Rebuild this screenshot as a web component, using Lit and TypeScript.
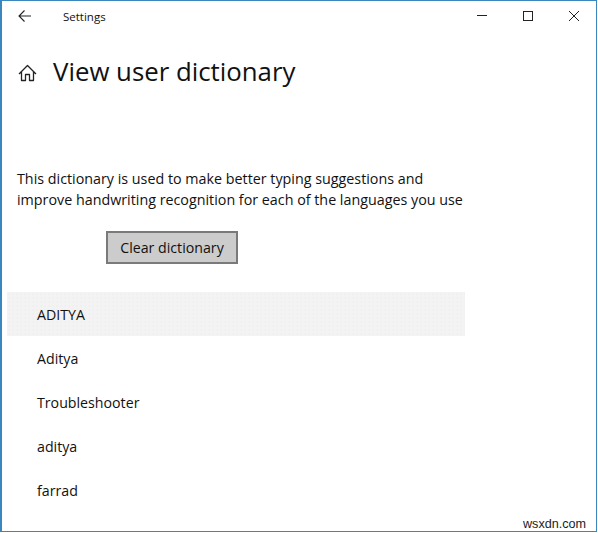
import { LitElement, html, css } from "lit";
import { customElement } from "lit/decorators.js";

@customElement("app-root")
export class AppRoot extends LitElement {
  static styles = css`
    :host { display: block; width: 598px; height: 533px; background: #fff; }
    * { box-sizing: border-box; }
    .win {
      width: 597px; height: 532px; background: #fff; color: #111;
      border: solid #3a87c0; border-width: 1px 1px 1px 2px;
      font-family: "Open Sans", "Noto Sans", sans-serif;
      display: flex; flex-direction: column; position: relative; overflow: hidden;
    }
    .bar { height: 30px; display: flex; align-items: center; flex: none; }
    .back { width: 44px; display: flex; justify-content: center; margin: 0 0 1px 1px; }
    .title { font-size: 11.5px; margin-left: 16px; flex: 1; }
    .ctl { display: flex; margin-right: -1px; }
    .ctl div { width: 46px; height: 30px; display: flex; align-items: center; justify-content: center; }
    .head { display: flex; align-items: center; margin-top: 22px; height: 36px; padding-left: 16px; }
    .head svg { flex: none; margin-top: 3px; }
    h1 { font-size: 25.8px; font-weight: 400; margin: 0 0 0 16px; white-space: nowrap; }
    .desc { margin: 79px 0 0 15px; font-size: 14.3px; line-height: 21px; white-space: nowrap; }
    .btn { margin: 21px 0 0 104px; width: 132px; height: 33px; background: #ccc; border: 2px solid #7a7a7a;
      font-size: 14.2px; display: flex; align-items: center; justify-content: center; }
    .list { margin: 28px 0 0 5px; width: 458px; }
    .row { height: 44px; display: flex; align-items: center; padding-left: 30px; font-size: 14.2px; }
    .row.sel {
      background-color: #f3f3f3;
      background-image: radial-gradient(circle, #ebebeb 0.6px, transparent 0.8px);
      background-size: 4px 4px;
    }
    .mark { position: absolute; right: 10px; bottom: 0; font-family: "Liberation Sans", sans-serif; font-size: 12.6px; color: #222; }
  `;
  render() {
    const items = ["ADITYA", "Aditya", "Troubleshooter", "aditya", "farrad"];
    return html`<div class="win">
      <div class="bar">
        <div class="back"><svg width="14" height="12" viewBox="0 0 14 12" fill="none" stroke="#222" stroke-width="1.1"><path d="M1 6H13M6.5 .5L1 6L6.5 11.5"/></svg></div>
        <div class="title">Settings</div>
        <div class="ctl">
          <div><svg width="12" height="12" viewBox="0 0 12 12" stroke="#222" fill="none"><path d="M1 5.5H11"/></svg></div>
          <div><svg width="12" height="12" viewBox="0 0 12 12" stroke="#222" fill="none"><rect x="1.5" y="1.5" width="9" height="9"/></svg></div>
          <div><svg width="12" height="12" viewBox="0 0 12 12" stroke="#222" fill="none"><path d="M1 1L11 11M11 1L1 11"/></svg></div>
        </div>
      </div>
      <div class="head">
        <svg width="19" height="18" viewBox="0 0 19 18" fill="none" stroke="#222" stroke-width="1.3" stroke-linejoin="round"><path d="M1 10L9.5 1.5L18 10M3.5 7.5V16.5H7.5V10.5H11.5V16.5H15.5V7.5"/></svg>
        <h1>View user dictionary</h1>
      </div>
      <div class="desc">This dictionary is used to make better typing suggestions and<br>improve handwriting recognition for each of the languages you use</div>
      <div class="btn">Clear dictionary</div>
      <div class="list">
        ${items.map((t, i) => html`<div class="row ${i === 0 ? "sel" : ""}">${t}</div>`)}
      </div>
      <div class="mark">wsxdn.com</div>
    </div>`;
  }
}
